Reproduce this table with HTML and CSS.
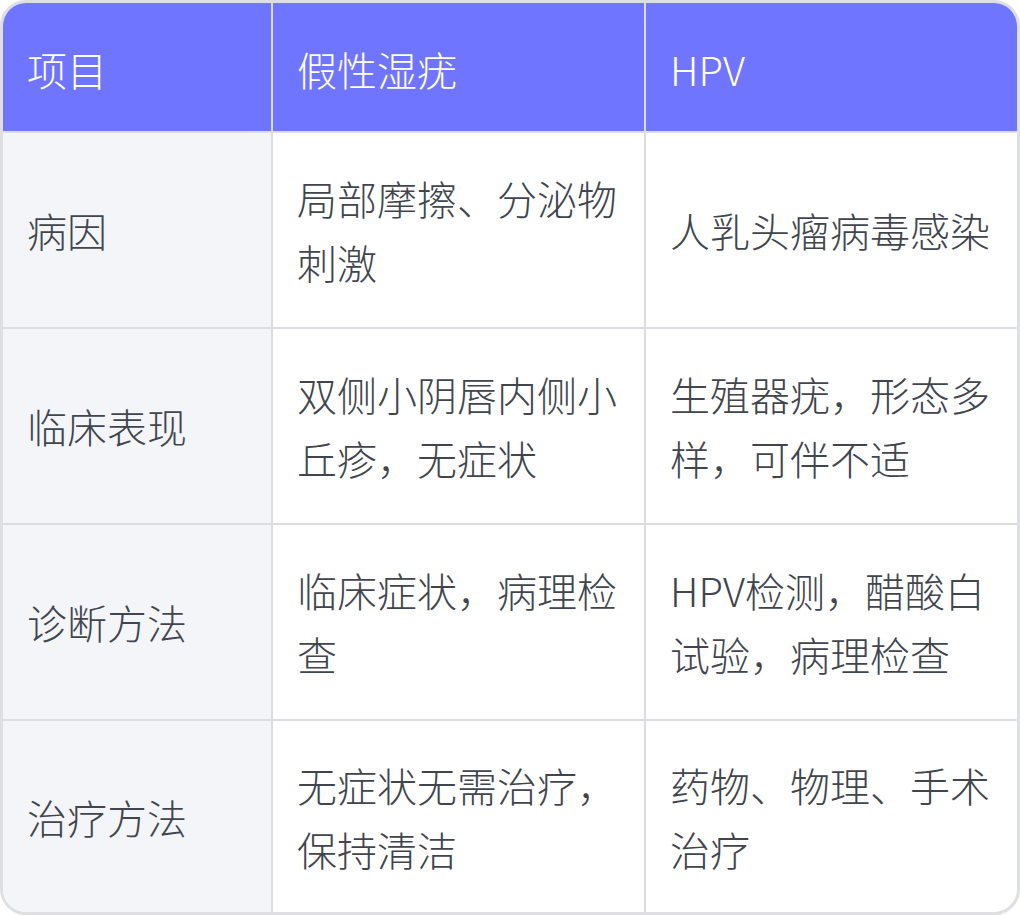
FILE: index.html
```html
<!DOCTYPE html>
<html lang="zh-CN">
<head>
<meta charset="utf-8">
<link rel="stylesheet" href="styles.css">
</head>
<body>
<div class="wrap">
<table class="cmp">
  <colgroup>
    <col class="c1"><col class="c2"><col class="c3">
  </colgroup>
  <thead>
    <tr><th>项目</th><th>假性湿疣</th><th>HPV</th></tr>
  </thead>
  <tbody>
    <tr><td>病因</td><td>局部摩擦、分泌物刺激</td><td>人乳头瘤病毒感染</td></tr>
    <tr><td>临床表现</td><td>双侧小阴唇内侧小丘疹，无症状</td><td>生殖器疣，形态多样，可伴不适</td></tr>
    <tr><td>诊断方法</td><td>临床症状，病理检查</td><td>HPV检测，醋酸白试验，病理检查</td></tr>
    <tr><td>治疗方法</td><td>无症状无需治疗，保持清洁</td><td>药物、物理、手术治疗</td></tr>
  </tbody>
</table>
</div>
</body>
</html>
```

FILE: styles.css
```css
html, body {
  margin: 0;
  padding: 0;
  background: #ffffff;
}
.wrap {
  width: 1020px;
  height: 915px;
  box-sizing: border-box;
  border: 3px solid #dedfe3;
  border-radius: 26px;
  overflow: hidden;
}
.cmp {
  width: 100%;
  border-collapse: separate;
  border-spacing: 0;
  table-layout: fixed;
  font-family: "Noto Sans CJK SC", "Noto Sans", sans-serif;
  font-weight: 300;
  font-size: 40px;
  line-height: 64px;
  color: #41454d;
}
.c1 { width: 270px; }
.c2 { width: 373px; }
.cmp th, .cmp td {
  text-align: left;
  vertical-align: middle;
  padding: 0 21px 0 24px;
  border-right: 2px solid #dcdde2;
  border-bottom: 2px solid #dcdde2;
  word-break: break-all;
  box-sizing: border-box;
}
.cmp th:last-child, .cmp td:last-child { border-right: none; }
.cmp tbody tr:last-child td { border-bottom: none; height: 192px; }
.cmp th {
  background: #7075ff;
  color: #ffffff;
  font-weight: 300;
  height: 130px;
  padding-top: 3px;
}
.cmp td {
  height: 196px;
}
.cmp td:first-child {
  background: #f4f5f9;
}
```
